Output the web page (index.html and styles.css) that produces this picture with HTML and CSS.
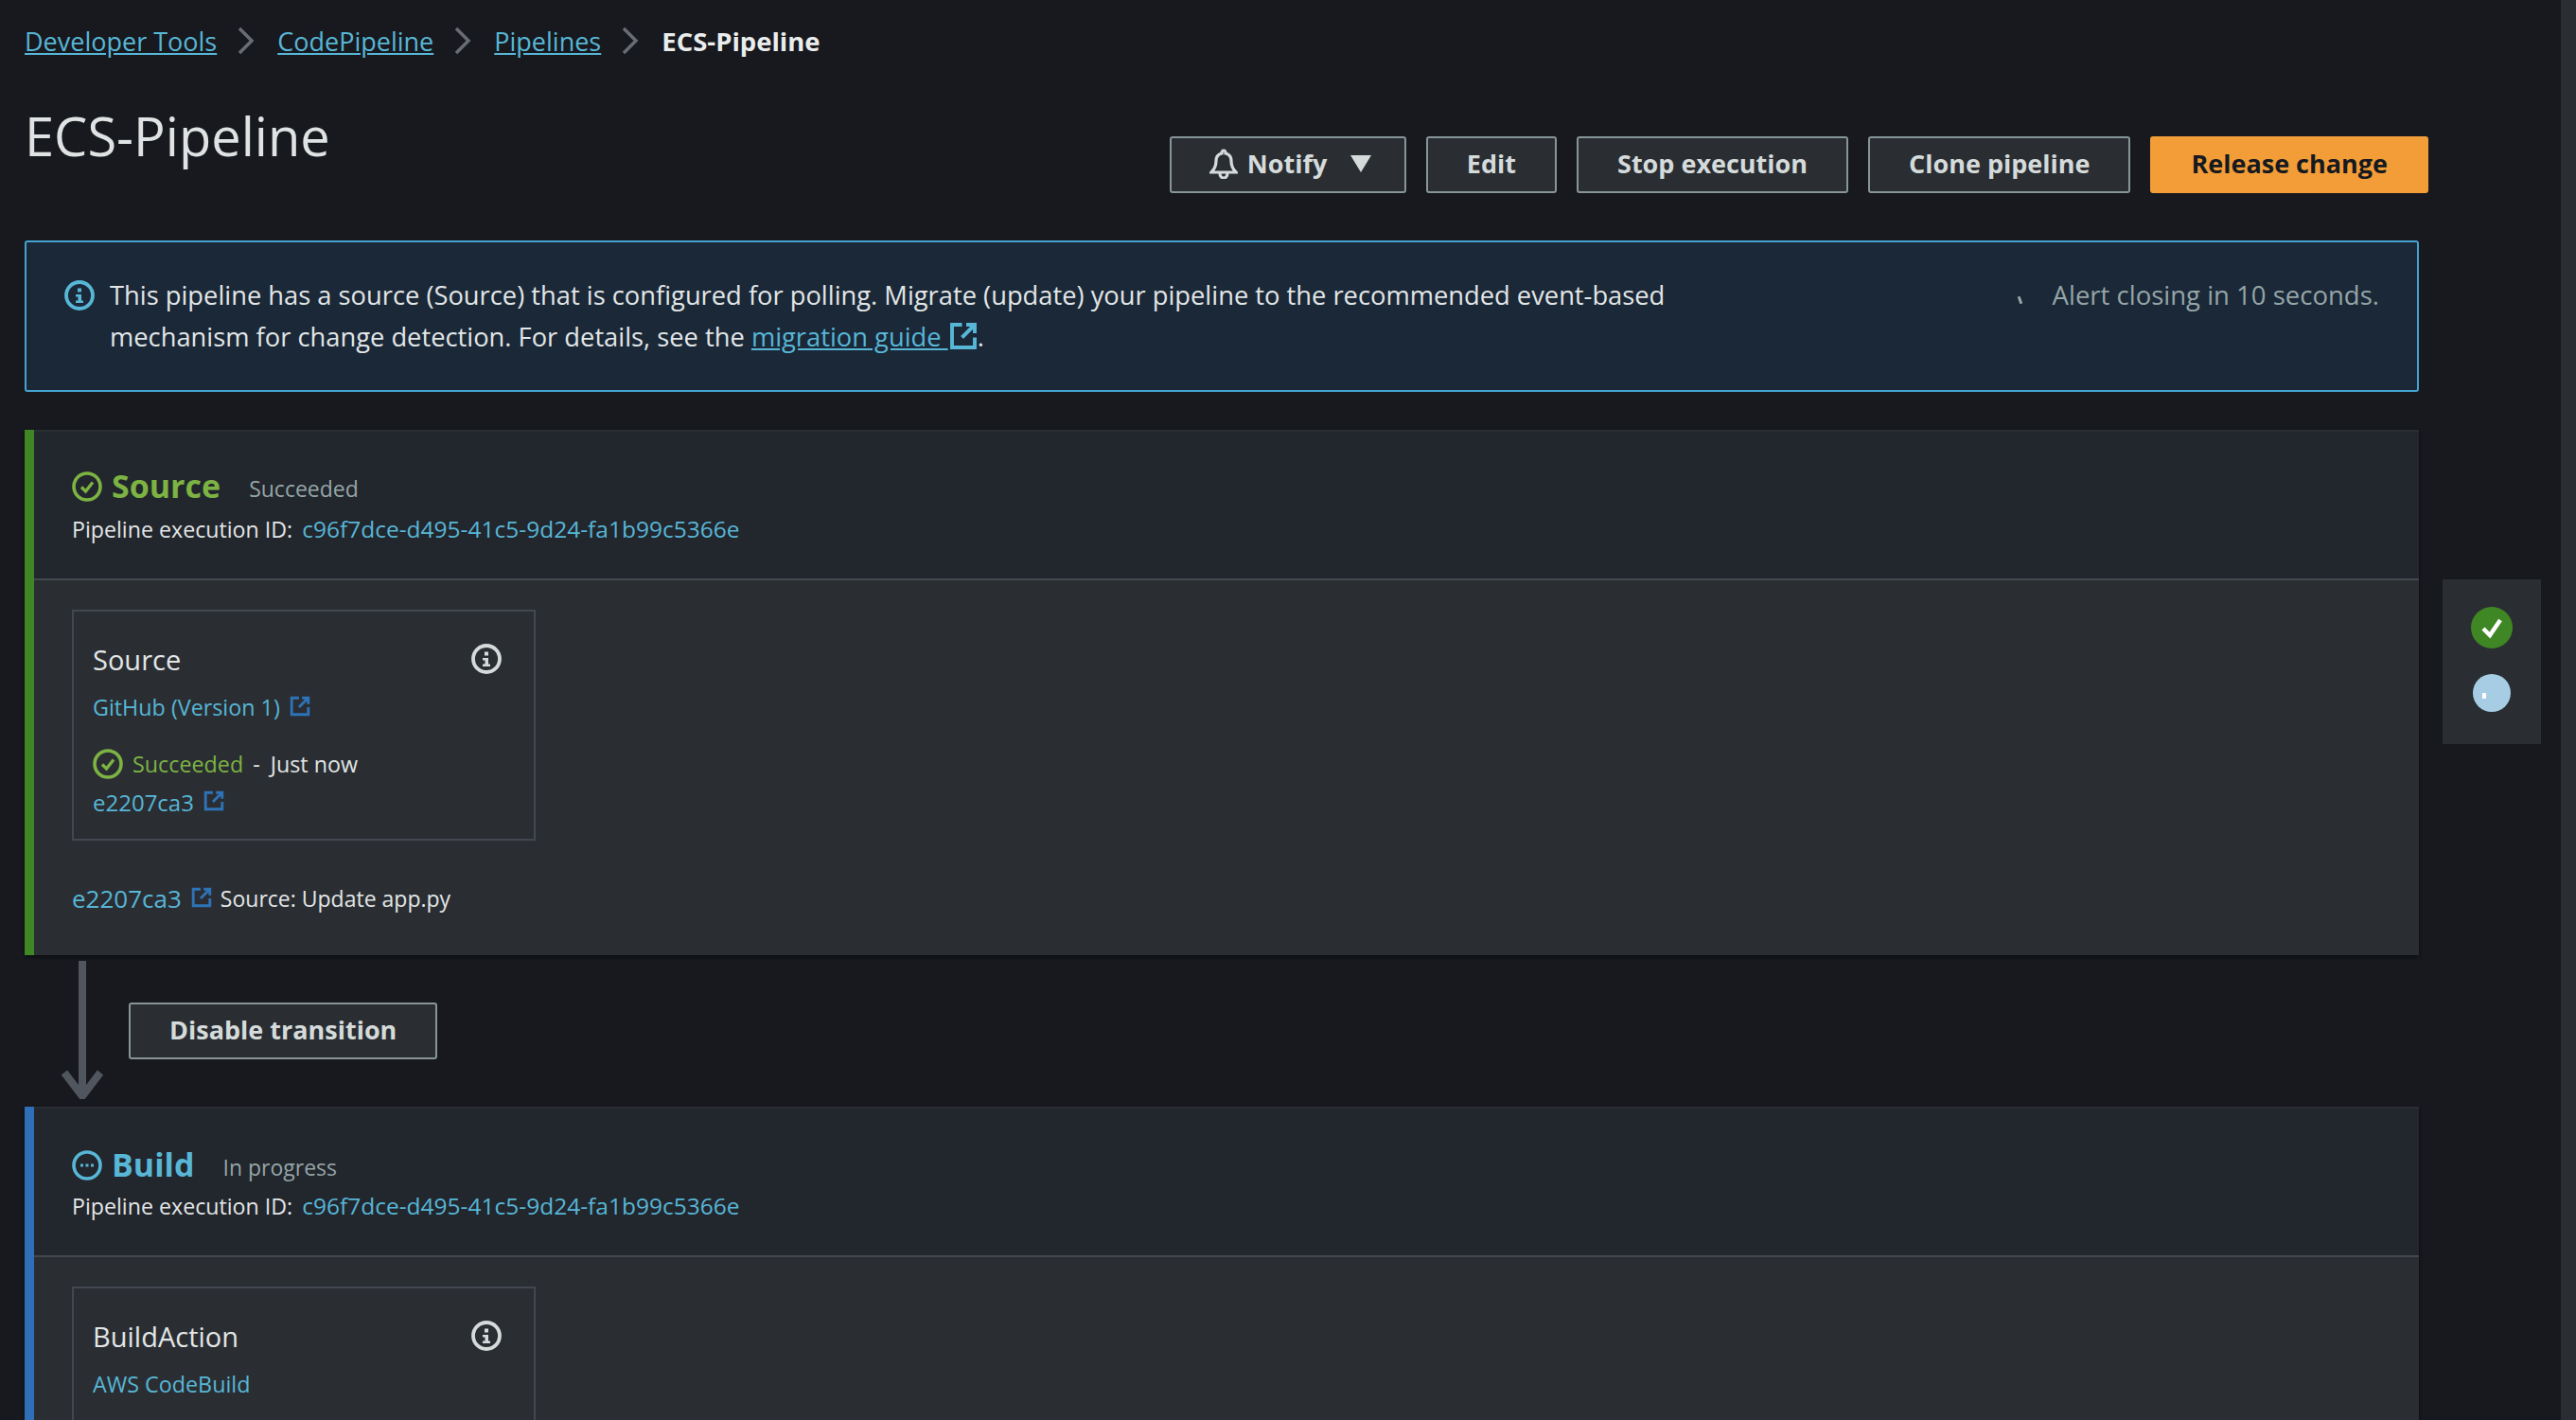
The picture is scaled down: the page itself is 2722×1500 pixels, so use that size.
FILE: index.html

```html
<!DOCTYPE html>
<html lang="en">
<head>
  <meta charset="UTF-8" />
  <title>ECS-Pipeline</title>
  <link rel="stylesheet" href="styles.css">
</head>
<body>
  <svg class="defs" width="0" height="0">
    <symbol id="ext" viewBox="0 0 20 20"><path d="M9 2H2v16h16v-7M12 2h6v6M18 2L9 11" fill="none" stroke="currentColor" stroke-width="2.600"/></symbol>
    <symbol id="check" viewBox="0 0 32 32"><circle cx="16" cy="16" r="14" fill="none" stroke="currentColor" stroke-width="3.600"/><path d="M10 16.500l4.500 4.500L22 11.500" fill="none" stroke="currentColor" stroke-width="3.400"/></symbol>
    <symbol id="info" viewBox="0 0 32 32"><circle cx="16" cy="16" r="14" fill="none" stroke="currentColor" stroke-width="3.800"/><path d="M14 8.500h4v4h-4zM12 15h6v6.500h2V24h-8v-2.500h2.500V17.500H12z" fill="currentColor"/></symbol>
    <symbol id="chev" viewBox="0 0 18 30"><path d="M2 2l13 13L2 28" fill="none" stroke="currentColor" stroke-width="3.500"/></symbol>
  </svg>

  <div class="layout">
    <div class="main">
      <nav class="crumbs">
        <a href="#">Developer Tools</a>
        <svg class="chev"><use href="#chev"/></svg>
        <a href="#">CodePipeline</a>
        <svg class="chev"><use href="#chev"/></svg>
        <a href="#">Pipelines</a>
        <svg class="chev"><use href="#chev"/></svg>
        <strong>ECS-Pipeline</strong>
      </nav>

      <header class="title-row">
        <h1>ECS-Pipeline</h1>
        <div class="actions">
          <button class="btn notify">
            <svg class="bell" viewBox="0 0 30 32"><path d="M15 2c1.500 0 2 1.500 2 3 4 1 6 4 6 8 0 5 1 8 5 12H2c4-4 5-7 5-12 0-4 2-7 6-8 0-1.500.5-3 2-3zM11 26c0 3 2 5 4 5s4-2 4-5" fill="none" stroke="currentColor" stroke-width="3.200"/></svg>
            Notify
            <span class="caret"></span>
          </button>
          <button class="btn">Edit</button>
          <button class="btn">Stop execution</button>
          <button class="btn">Clone pipeline</button>
          <button class="btn primary">Release change</button>
        </div>
      </header>

      <section class="alert">
        <svg class="alert-icon"><use href="#info"/></svg>
        <p class="alert-text">This pipeline has a source (Source) that is configured for polling. Migrate (update) your pipeline to the recommended event-based mechanism for change detection. For details, see the <a href="#">migration guide <svg class="ext-lg"><use href="#ext"/></svg></a>.</p>
        <div class="alert-close"><span class="tick"></span>Alert closing in 10 seconds.</div>
      </section>

      <section class="stage ok">
        <div class="stage-head">
          <div class="stage-title">
            <svg class="stage-icon"><use href="#check"/></svg>
            <h2>Source</h2>
            <span class="stage-status">Succeeded</span>
          </div>
          <div class="exec">Pipeline execution ID: <a href="#">c96f7dce-d495-41c5-9d24-fa1b99c5366e</a></div>
        </div>
        <div class="stage-body">
          <div class="card">
            <div class="card-head"><h3>Source</h3><svg class="card-info"><use href="#info"/></svg></div>
            <div class="provider"><a href="#">GitHub (Version 1)</a><svg class="ext"><use href="#ext"/></svg></div>
            <div class="result">
              <svg class="result-icon"><use href="#check"/></svg>
              <span class="done">Succeeded</span><span class="dash">-</span><span>Just now</span>
            </div>
            <div class="commit"><a href="#">e2207ca3</a><svg class="ext"><use href="#ext"/></svg></div>
          </div>
          <div class="revision"><a href="#">e2207ca3</a><svg class="ext"><use href="#ext"/></svg><span>Source: Update app.py</span></div>
        </div>
      </section>

      <div class="transition">
        <svg class="arrow" viewBox="0 0 44 146"><path d="M22 0v140M3 118l19 25 19-25" fill="none" stroke="#50565e" stroke-width="8"/></svg>
        <button class="btn">Disable transition</button>
      </div>

      <section class="stage running">
        <div class="stage-head">
          <div class="stage-title">
            <svg class="stage-icon" viewBox="0 0 32 32"><circle cx="16" cy="16" r="14" fill="none" stroke="currentColor" stroke-width="3.600"/><path d="M9 14.500h3v3H9zM14.500 14.500h3v3h-3zM20 14.500h3v3h-3z" fill="currentColor"/></svg>
            <h2>Build</h2>
            <span class="stage-status">In progress</span>
          </div>
          <div class="exec">Pipeline execution ID: <a href="#">c96f7dce-d495-41c5-9d24-fa1b99c5366e</a></div>
        </div>
        <div class="stage-body">
          <div class="card">
            <div class="card-head"><h3>BuildAction</h3><svg class="card-info"><use href="#info"/></svg></div>
            <div class="provider"><a href="#">AWS CodeBuild</a></div>
          </div>
        </div>
      </section>
    </div>

    <aside class="rail">
      <span class="dot green"><svg viewBox="0 0 44 44" width="44" height="44"><path d="M13 23l7 7 11-16" fill="none" stroke="#fff" stroke-width="4.500"/></svg></span>
      <span class="dot blue"><i class="glint"></i></span>
    </aside>
    <div class="edge"></div>
  </div>
</body>
</html>
```

FILE: styles.css

```css
html, body {
  margin: 0;
  height: 1500px;
  overflow: hidden;
}
body {
  background: #17191e;
  color: #d5dbdb;
  font-family: "Open Sans", "Noto Sans", sans-serif;
  font-size: 23.300px;
}
a {
  color: #58b6d6;
}
h1, h2, h3, p {
  margin: 0;
  font-weight: 400;
}
.defs {
  position: absolute;
}
.layout {
  display: flex;
  height: 1500px;
  overflow: hidden;
}
.main {
  width: 2530px;
  margin-left: 26px;
  flex: none;
}

/* breadcrumbs */
.crumbs {
  display: flex;
  align-items: center;
  height: 30px;
  padding: 28px 0 1px;
  font-size: 27px;
}
.crumbs strong {
  font-weight: 700;
  font-size: 27.500px;
  color: #eaeded;
}
.chev {
  width: 18px;
  height: 30px;
  margin: 0 24px 0 22px;
  color: #686d74;
}

/* title row */
.title-row {
  display: flex;
  justify-content: space-between;
  margin: 85px -10px 0 0;
  height: 60px;
}
h1 {
  font-size: 56px;
  line-height: 60px;
  margin-top: -31px;
  color: #dfe3e3;
}
.actions {
  display: flex;
  gap: 21px;
}
.btn {
  height: 60px;
  padding: 0 41px 3px;
  box-sizing: border-box;
  background: #2a2e33;
  color: #d5dbdb;
  border: 2px solid #879596;
  border-radius: 3px;
  font: 700 27px "Open Sans", "Noto Sans", sans-serif;
  white-space: nowrap;
}
.notify {
  display: flex;
  align-items: center;
  width: 250px;
  padding: 0 0 3px 40px;
}
.bell {
  width: 30px;
  height: 32px;
  margin-right: 10px;
}
.caret {
  width: 0;
  height: 0;
  margin-left: 25px;
  border-left: 11px solid transparent;
  border-right: 11px solid transparent;
  border-top: 18px solid #d5dbdb;
}
.primary {
  background: #f39d38;
  border-color: #f39d38;
  color: #16191f;
}

/* alert */
.alert {
  display: flex;
  height: 160px;
  box-sizing: border-box;
  margin-top: 50px;
  padding: 40px 40px 0;
  background: #1a2838;
  border: 2px solid #44a3cf;
  border-radius: 3px;
}
.alert-icon {
  width: 32px;
  height: 32px;
  flex: none;
  color: #58b6d6;
}
.alert-text {
  width: 1700px;
  margin: -6px 0 0 16px;
  font-size: 27.300px;
  line-height: 44px;
  color: #e2e6e6;
}
.ext-lg {
  width: 30px;
  height: 30px;
  margin-left: 1px;
  vertical-align: -4px;
}
.alert-close {
  margin: -6px 0 0 auto;
  line-height: 44px;
  font-size: 27.500px;
  color: #95a5a6;
}
.tick {
  display: inline-block;
  width: 3px;
  height: 8px;
  margin-right: 33px;
  background: #95a5a6;
  transform: rotate(-20deg);
  vertical-align: 1px;
}

/* stages */
.stage {
  margin-top: 40px;
  border-left: 10px solid;
  background: #2a2e33;
  box-shadow: 0 2px 3px #0c0d10;
}
.ok {
  border-color: #3f8624;
  height: 555px;
}
.running {
  border-color: #2e6fb5;
  margin-top: 0;
  height: 340px;
}
.stage-head {
  height: 159px;
  box-sizing: border-box;
  padding: 38px 0 0 40px;
  background: #22262d;
  border-bottom: 2px solid #424750;
  border-top: 2px solid #2a2e33;
}
.stage-title {
  display: flex;
  align-items: center;
  height: 44px;
}
.ok .stage-title {
  margin: -2px 0 2px;
  color: #7cb342;
}
.running .stage-title {
  color: #58b6d6;
}
.stage-icon {
  width: 32px;
  height: 32px;
  margin-right: 10px;
}
h2 {
  font-size: 34px;
  line-height: 44px;
  font-weight: 700;
  margin-top: -2px;
}
.stage-title .stage-status {
  margin: 4px 0 0 30px;
  font-size: 23px;
  color: #95a5a6;
}
.exec {
  margin-top: -1px;
  line-height: 44px;
  font-size: 23.200px;
  color: #e2e6e6;
}
.exec a {
  margin-left: 4px;
  font-size: 24.500px;
  text-decoration: none;
}
.stage-body {
  padding: 31px 0 0 40px;
}
.card {
  width: 490px;
  height: 244px;
  box-sizing: border-box;
  padding: 28px 20px 0 20px;
  border: 2px solid #424750;
}
.card-head {
  display: flex;
  justify-content: space-between;
  align-items: center;
  height: 44px;
}
h3 {
  font-size: 29px;
  color: #e2e6e6;
}
.card-info {
  width: 32px;
  height: 32px;
  margin-right: 14px;
}
.provider, .commit, .revision {
  display: flex;
  align-items: center;
}
.provider a, .commit a, .revision a {
  text-decoration: none;
}
.provider {
  margin-top: 7px;
  height: 44px;
}
.ext {
  width: 22px;
  height: 22px;
  margin: -3px 0 0 10px;
  color: #2e73b8;
}
.result {
  display: flex;
  align-items: center;
  margin-top: 16px;
  height: 44px;
  color: #e2e6e6;
}
.result-icon {
  width: 32px;
  height: 32px;
  margin-right: 10px;
  color: #7cb342;
}
.done {
  color: #7cb342;
}
.dash {
  margin: 0 11px 0 10px;
}
.commit {
  margin-top: -4px;
  height: 44px;
  font-size: 24px;
}
.revision {
  margin-top: 39px;
  height: 44px;
  color: #e2e6e6;
}
.revision a {
  font-size: 26px;
}
.revision span {
  margin-left: 9px;
  font-size: 23px;
}

/* transition between stages */
.transition {
  display: flex;
  align-items: flex-start;
  height: 160px;
  padding-left: 39px;
}
.arrow {
  width: 44px;
  height: 146px;
  margin-top: 6px;
}
.transition .btn {
  margin: 50px 0 0 27px;
}

/* side rail */
.rail {
  width: 104px;
  height: 174px;
  flex: none;
  box-sizing: border-box;
  margin: 612px 0 0 25px;
  padding-top: 29px;
  display: flex;
  flex-direction: column;
  align-items: center;
  gap: 27px;
  background: #2a2e33;
}
.dot {
  display: block;
  position: relative;
  border-radius: 50%;
}
.green {
  width: 44px;
  height: 44px;
  background: #3f8624;
}
.blue {
  width: 40px;
  height: 40px;
  background: #a6cde4;
}
.glint {
  position: absolute;
  left: 10px;
  top: 20px;
  width: 4px;
  height: 6px;
  background: #fff;
}
.edge {
  width: 16px;
  flex: none;
  margin-left: auto;
  background: #2a2e33;
}
```
